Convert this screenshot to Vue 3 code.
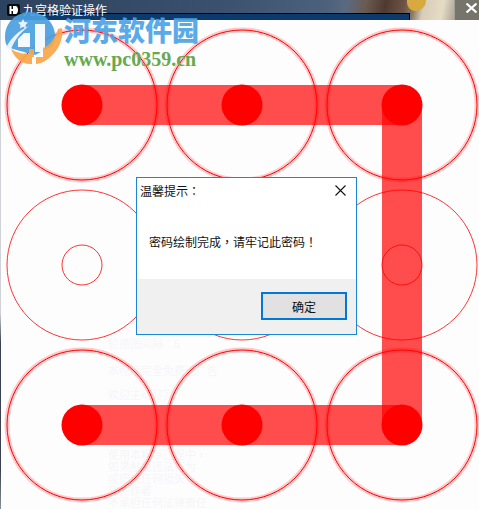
<template>
  <div class="win">
    <div class="titlebar">
      <span class="eye"></span>
      <div class="strip"></div>
      <svg class="app-icon" width="13" height="12" viewBox="0 0 13 12">
        <rect x="0" y="0" width="13" height="12" rx="2" fill="#0b0b0d" />
        <path d="M2.500 2h2v3h1.500v-3h2.500c1.800 0 2.500 2 2.500 4s-.7 4-2.500 4h-2.500v-3h-1.500v3h-2z" fill="#fff" />
      </svg>
      <span class="title">九宫格验证操作</span>
      <div class="close">
        <svg width="11" height="10" viewBox="0 0 11 10">
          <path d="M.5 .5l10 9M10.500 .5l-10 9" stroke="#fff" stroke-width="2.200" fill="none" />
        </svg>
      </div>
    </div>

    <div class="board">
      <div class="edge"></div>
      <div class="ghost">
        <p class="g1">轮播图间隔：5</p>
        <p class="g2">本程序完全免费无广告</p>
        <p class="g3">欢迎主动打赏</p>
        <div class="g-block">
          <p v-for="line in ghostLines" :key="line">{{ line }}</p>
        </div>
      </div>

      <svg class="pattern" width="479" height="489" viewBox="0 20 479 489">
        <g v-for="node in nodes" :key="node.id">
          <template v-if="node.on">
            <circle :cx="node.x" :cy="node.y" r="75" fill="none" stroke="#ff0000" stroke-opacity="0.2" stroke-width="5" />
            <circle :cx="node.x" :cy="node.y" r="75" fill="none" stroke="#ff0000" stroke-width="1" />
          </template>
          <template v-else>
            <circle :cx="node.x" :cy="node.y" r="75" fill="none" stroke="#ff0000" stroke-width="0.800" />
            <circle :cx="node.x" :cy="node.y" r="20" fill="none" stroke="#ff0000" stroke-width="0.800" />
          </template>
        </g>
        <line
          v-for="seg in segments"
          :key="seg.id"
          :x1="seg.x1"
          :y1="seg.y1"
          :x2="seg.x2"
          :y2="seg.y2"
          stroke="#ff0000"
          stroke-opacity="0.7"
          stroke-width="40"
        />
        <g v-for="node in nodes" :key="'dot' + node.id">
          <circle v-if="node.on" :cx="node.x" :cy="node.y" r="20.500" fill="#ff0000" />
        </g>
      </svg>

      <div class="dialog">
        <div class="dialog-head">
          <span>温馨提示：</span>
          <svg width="11" height="11" viewBox="0 0 11 11">
            <path d="M0.500 0.500l10 10M10.500 0.500l-10 10" stroke="#111" stroke-width="1.100" fill="none" />
          </svg>
        </div>
        <div class="dialog-body">密码绘制完成，请牢记此密码！</div>
        <div class="dialog-foot">
          <button class="ok">确定</button>
        </div>
      </div>
    </div>

    <div class="watermark">
      <svg class="logo" width="60" height="56" viewBox="0 0 60 56">
        <path d="M25 1C39 1 50 12 50 25c0 4-1 7-2.500 10L30 44 8 38 2 35C0 32 0 28 0 25 0 12 11 1 25 1z" fill="#4a9fe0" fill-opacity="0.92" />
        <path d="M1 37C5 28 13 20 24 15c-8 6-14 13-18 23z" fill="#e9f3fb" />
        <path d="M13 28l6-6h6v14H13zM30 13h10v28H30z" fill="#f4f9fd" />
        <path d="M18 8l1.500 3 3.500.5-2.500 2.500.6 3.500-3.100-1.700-3.100 1.700.6-3.500-2.500-2.500 3.500-.5z" fill="#e9f3fb" />
        <path d="M6 38c6 4 13 5 18 5v-5h5v8h9v-9c7-3 12-9 15-19l4-1c2 14-6 26-17 33-3 2-7 3-9 3v-7h-4v7C16 54 9 46 6 38z" fill="#f7a648" fill-opacity="0.92" />
      </svg>
      <div class="wm-text">
        <div class="wm-cn">河东软件园</div>
        <div class="wm-url">www.pc0359.cn</div>
      </div>
    </div>
  </div>
</template>

<script setup>
const rows = [105, 265, 425]
const cols = [82, 242, 402]
const lit = [true, true, true, false, false, false, true, true, true]

const nodes = rows.flatMap((y, r) =>
  cols.map((x, c) => ({ id: r * 3 + c, x, y, on: lit[r * 3 + c] }))
)

// each stroke of the pattern is drawn on its own, so corners overlap darker
const segments = [
  { id: 1, x1: 82, y1: 105, x2: 242, y2: 105 },
  { id: 2, x1: 242, y1: 105, x2: 402, y2: 105 },
  { id: 3, x1: 402, y1: 105, x2: 402, y2: 425 },
  { id: 4, x1: 402, y1: 425, x2: 242, y2: 425 },
  { id: 5, x1: 242, y1: 425, x2: 82, y2: 425 }
]

const ghostLines = [
  '使用本程序过程中，',
  '如果触发违法行为',
  '或造成任何损失',
  '软件作者',
  '不承担任何法律责任'
]
</script>

<style>
html,
body {
  margin: 0;
  background: #fff;
}
</style>

<style scoped>
.win {
  position: relative;
  width: 479px;
  height: 509px;
  overflow: hidden;
  font-family: "Liberation Sans", "Noto Sans CJK TC", sans-serif;
}
.titlebar {
  position: relative;
  height: 20px;
  display: flex;
  align-items: flex-start;
  padding: 4px 0 0 7px;
  gap: 3px;
  box-sizing: border-box;
  background: linear-gradient(
    100deg,
    #2c435f 0%,
    #3a506e 45%,
    #4c617c 68%,
    #5a6a80 72%,
    #6b5a50 76%,
    #4e3a30 80%,
    #6e5445 84%,
    #8d7a68 86%,
    #d8cdb8 88%,
    #e6dcc6 92%,
    #a9a294 95%,
    #8a867c 100%
  );
}
.eye {
  position: absolute;
  left: 407px;
  top: 0;
  width: 19px;
  height: 11px;
  border-radius: 0 0 12px 10px;
  background: #d8a93e;
}
.strip {
  position: absolute;
  left: 18px;
  width: 392px;
  top: 13px;
  height: 7px;
  background: #0c3a6c;
  border-top: 1px solid #000;
  border-right: 1px solid #000;
  box-sizing: border-box;
}
.app-icon {
  position: relative;
}
.title {
  position: relative;
  margin-top: 1px;
  color: #fff;
  font-size: 12px;
  line-height: 12px;
}
.close {
  position: absolute;
  right: 0;
  top: 0;
  width: 25px;
  height: 20px;
  padding: 3px 2px 0 0;
  display: flex;
  align-items: flex-start;
  justify-content: flex-end;
  background: #77746c;
  border-left: 1px solid #a3a097;
  box-sizing: border-box;
}
.board {
  position: relative;
  height: 489px;
  background: #fdfdfe;
}
.edge {
  position: absolute;
  left: 0;
  top: 0;
  bottom: 0;
  width: 1px;
  background: linear-gradient(180deg, #cfd3d8 0%, #cfd3d8 60%, #39424e 66%, #39424e 92%, #8a8f96 100%);
}
.ghost {
  position: absolute;
  left: 108px;
  top: 318px;
  color: #f6f6f8;
  font-size: 11px;
  line-height: 12px;
}
.ghost p {
  margin: 0;
  white-space: nowrap;
}
.g2 {
  margin-top: 15px !important;
}
.g3 {
  margin-top: 12px !important;
}
.g-block {
  margin-top: 48px;
}
.pattern {
  position: absolute;
  left: 0;
  top: 0;
}
.dialog {
  position: absolute;
  left: 136px;
  top: 157px;
  width: 221px;
  height: 158px;
  display: flex;
  flex-direction: column;
  background: #fff;
  border: 1px solid #1a86d6;
  box-sizing: border-box;
  font-size: 12px;
  color: #111;
}
.dialog-head {
  display: flex;
  align-items: center;
  justify-content: space-between;
  height: 24px;
  padding: 0 10px 0 3px;
}
.dialog-body {
  flex: 1;
  padding: 33px 0 0 12px;
  line-height: 16px;
}
.dialog-foot {
  display: flex;
  justify-content: flex-end;
  align-items: flex-start;
  height: 55px;
  padding: 13px 9px 0 0;
  background: #f0f0f0;
  box-sizing: border-box;
}
.ok {
  width: 86px;
  height: 28px;
  padding: 0;
  background: #e1e1e1;
  border: 2px solid #0078d7;
  font: inherit;
  color: #111;
}
.watermark {
  position: absolute;
  left: 5px;
  top: 11px;
  display: flex;
}
.wm-text {
  display: flex;
  flex-direction: column;
  margin-top: 7px;
  margin-left: -1px;
}
.wm-cn {
  font-family: "Noto Sans CJK SC", sans-serif;
  font-weight: 900;
  font-size: 27px;
  line-height: 24px;
  color: #4da3e6;
  opacity: 0.92;
}
.wm-url {
  margin-top: 8px;
  font-family: "Liberation Serif", serif;
  font-weight: 700;
  font-size: 20px;
  line-height: 18px;
  color: #66a94f;
  white-space: nowrap;
}
</style>
